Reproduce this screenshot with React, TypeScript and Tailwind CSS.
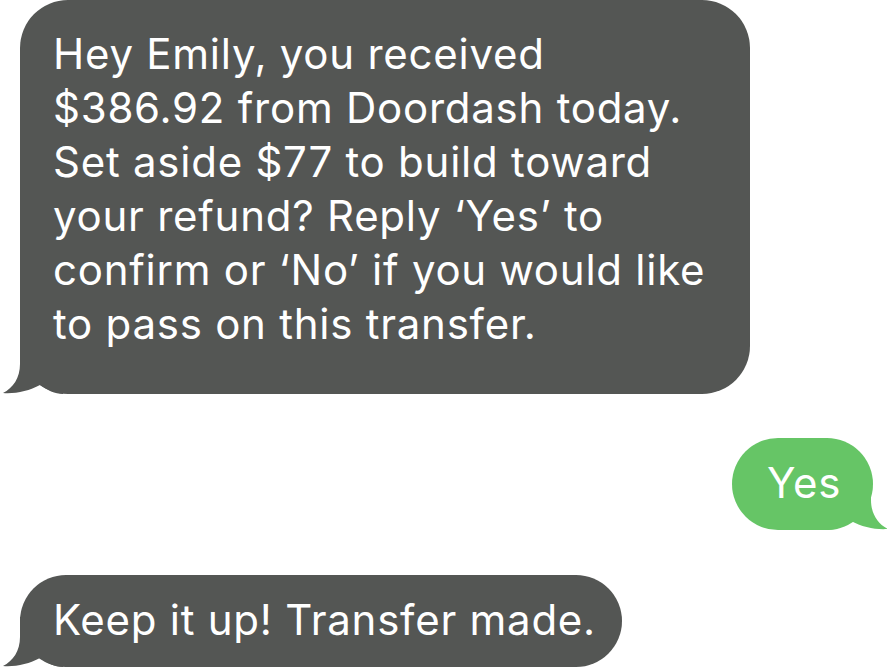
import React from "react";

function Tail({ color, right }: { color: string; right?: boolean }) {
  return (
    <svg
      width="60"
      height="50"
      viewBox="0 0 60 50"
      className={right ? "absolute bottom-0 -right-[15px] -scale-x-100" : "absolute bottom-0 -left-[17px]"}
    >
      <path
        d="M17,0 L17,20 C17,34 10,44 0,49 C12,50 26,47 37,41 C44,46 52,50 60,50 L60,0 Z"
        fill={color}
      />
    </svg>
  );
}

const font = { fontFamily: "Inter, 'Noto Sans', sans-serif" };

export default function App() {
  return (
    <div className="w-[887px] h-[669px] bg-white overflow-hidden flex flex-col" style={font}>
      <div className="pl-[20px]">
        <div className="relative w-[730px] rounded-[48px] bg-[#545654] pl-[33px] pt-[27px] pb-[43px] text-white text-[42px] leading-[54px] tracking-[0.75px] whitespace-nowrap">
          <Tail color="#545654" />
          <span className="relative">
            Hey Emily, you received
            <br />
            $386.92 from Doordash today.
            <br />
            Set aside $77 to build toward
            <br />
            your refund? Reply ‘Yes’ to
            <br />
            confirm or ‘No’ if you would like
            <br />
            to pass on this transfer.
          </span>
        </div>
      </div>
      <div className="flex justify-end pr-[14px] mt-[44px]">
        <div className="relative w-[141px] rounded-[46px] bg-[#66c566] pl-[35px] pt-[18px] pb-[20px] text-white text-[42px] leading-[54px] tracking-[0.75px] whitespace-nowrap">
          <Tail color="#66c566" right />
          <span className="relative">Yes</span>
        </div>
      </div>
      <div className="pl-[20px] mt-[45px] flex">
        <div className="relative w-[602px] rounded-[46px] bg-[#545654] pl-[33px] pt-[18px] pb-[20px] text-white text-[42px] leading-[54px] tracking-[0.75px] whitespace-nowrap">
          <Tail color="#545654" />
          <span className="relative">Keep it up! Transfer made.</span>
        </div>
      </div>
    </div>
  );
}
